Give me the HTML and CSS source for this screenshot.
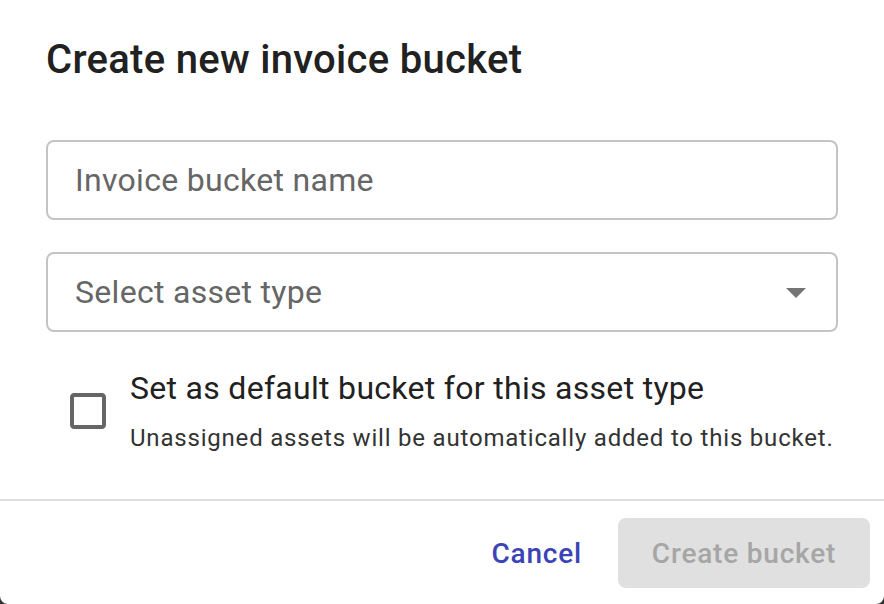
FILE: index.html
```html
<!DOCTYPE html>
<html lang="en">
<head>
    <meta charset="UTF-8">
    <meta name="viewport" content="width=device-width, initial-scale=1.0">
    <title>Create new invoice bucket</title>

    <link rel="stylesheet" href="styles.css">
</head>
<body>
    <div class="dialog">
        <h2 class="dialog-title">Create new invoice bucket</h2>

        <div class="dialog-content">
            <input class="field" type="text" placeholder="Invoice bucket name">

            <div class="field select"> <!-- Select fechado, sem valor -->
                <span class="select-text">Select asset type</span>
                <svg class="select-arrow" viewBox="0 0 24 24" width="48" height="48">
                    <path d="M7 10l5 5 5-5z"></path>
                </svg>
            </div>

            <label class="option">
                <span class="checkbox">
                    <svg viewBox="0 0 24 24" width="48" height="48">
                        <path d="M19 5v14H5V5h14m0-2H5c-1.1 0-2 .9-2 2v14c0 1.1.9 2 2 2h14c1.1 0 2-.9 2-2V5c0-1.1-.9-2-2-2z"></path>
                    </svg>
                </span>
                <span class="option-text">
                    <span class="option-primary">Set as default bucket for this asset type</span>
                    <span class="option-secondary">Unassigned assets will be automatically added to this bucket.</span>
                </span>
            </label>
        </div>

        <div class="dialog-actions">
            <button class="btn btn-text">Cancel</button>
            <button class="btn btn-contained" disabled>Create bucket</button>
        </div>
    </div>
</body>
</html>
```

FILE: styles.css
```css
body {
    margin: 0;
    background-color: #333;
    font-family: Roboto, "Liberation Sans", Arial, sans-serif;
}

.dialog {
    width: 884px;
    height: 604px;
    background-color: #fff;
    border-radius: 0 0 8px 8px;
    display: flex;
    flex-direction: column;
    overflow: hidden;
}

.dialog-title {
    margin: 0;
    padding: 28px 46px 0;
    font-size: 40px;
    font-weight: 500;
    line-height: 64px;
    letter-spacing: 0.3px;
    color: #212121;
}

.dialog-content {
    padding: 48px 46px 0;
    display: flex;
    flex-direction: column;
    flex: 1;
}

.field {
    box-sizing: border-box;
    width: 792px;
    height: 80px;
    margin: 0;
    padding: 0 27px;
    border: 2px solid #c4c4c4;
    border-radius: 8px;
    font-family: inherit;
    font-size: 32px;
    letter-spacing: 0.3px;
    color: #212121;
    background: #fff;
    outline: none;
}

.field::placeholder {
    color: #666;
    opacity: 1;
}

.select {
    margin-top: 32px;
    display: flex;
    align-items: center;
    justify-content: space-between;
    padding-right: 16px;
}

.select-text {
    color: #666;
}

.select-arrow {
    fill: #757575;
}

.option {
    margin-top: 32px;
    display: flex;
    align-items: center;
}

.checkbox {
    display: flex;
    padding: 18px;
    fill: #666;
}

.option-text {
    display: flex;
    flex-direction: column;
}

.option-primary {
    font-size: 32px;
    line-height: 48px;
    letter-spacing: 0.3px;
    color: #212121;
}

.option-secondary {
    margin-top: 6px;
    font-size: 24px;
    line-height: 40px;
    letter-spacing: 0.8px;
    color: #333;
}

.dialog-actions {
    border-top: 2px solid #e0e0e0;
    padding: 17px 14px 16px;
    display: flex;
    justify-content: flex-end;
    align-items: center;
    gap: 20px;
}

.btn {
    height: 70px;
    border: none;
    border-radius: 8px;
    font-family: inherit;
    font-size: 28px;
    font-weight: 500;
    letter-spacing: 0.8px;
    background: none;
    cursor: pointer;
}

.btn-text {
    padding: 0 16px;
    color: #3b43b6;
}

.btn-contained {
    width: 252px;
    padding: 0;
    background-color: #e0e0e0;
    color: #a6a6a6;
    cursor: default;
}
```
